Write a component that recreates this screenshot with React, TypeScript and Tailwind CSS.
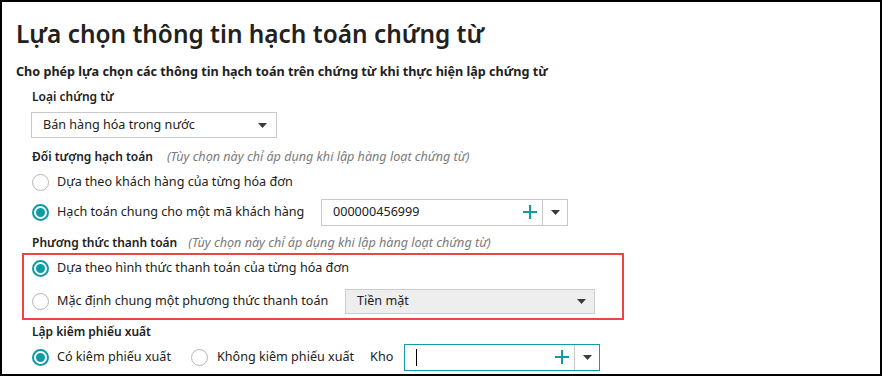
import React from "react";

const Radio = ({ checked }: { checked?: boolean }) =>
  checked ? (
    <span className="flex h-[17px] w-[17px] shrink-0 items-center justify-center rounded-full border-2 border-[#0e9aa7] bg-white">
      <span className="h-[9px] w-[9px] rounded-full bg-[#0e9aa7]" />
    </span>
  ) : (
    <span className="block h-[17px] w-[17px] shrink-0 rounded-full border border-[#b5b5b5] bg-white" />
  );

const Caret = () => (
  <svg width="9" height="5" viewBox="0 0 9 5" className="shrink-0">
    <path d="M0 0 H9 L4.5 5 Z" fill="#3a3a3a" />
  </svg>
);

const Plus = () => (
  <svg width="14" height="14" viewBox="0 0 14 14" className="block shrink-0">
    <path d="M7 0 V14 M0 7 H14" stroke="#0e9aa7" strokeWidth="2" />
  </svg>
);

export default function App() {
  return (
    <div
      className="h-[376px] w-[882px] overflow-hidden border-2 border-black bg-white pl-[14px] pt-[14px] text-[12.6px] text-[#212121]"
      style={{ fontFamily: '"Noto Sans", "Open Sans", sans-serif' }}
    >
      <div className="flex h-[36px] items-center text-[24.4px] font-semibold leading-none">
        Lựa chọn thông tin hạch toán chứng từ
      </div>
      <div className="mt-[10px] flex h-[20px] items-center font-bold">
        Cho phép lựa chọn các thông tin hạch toán trên chứng từ khi thực hiện lập chứng từ
      </div>

      <div className="ml-[16px]">
        <div className="mt-[5px] flex h-[20px] items-center text-[12px] font-semibold">Loại chứng từ</div>
        <div className="-ml-px mt-[5px] flex h-[26px] w-[246px] items-center justify-between border border-[#c9c9c9] pl-[11px] pr-[9px]">
          <span>Bán hàng hóa trong nước</span>
          <Caret />
        </div>

        <div className="mt-[9px] flex h-[20px] items-center">
          <span className="text-[12px] font-semibold">Đối tượng hạch toán</span>
          <span className="ml-[14px] italic text-[#7a7a7a]">(Tùy chọn này chỉ áp dụng khi lập hàng loạt chứng từ)</span>
        </div>
        <div className="mt-[2px] flex h-[26px] items-center gap-[8px]">
          <Radio />
          <span>Dựa theo khách hàng của từng hóa đơn</span>
        </div>
        <div className="mt-[4px] flex h-[26px] items-center">
          <Radio checked />
          <span className="ml-[8px]">Hạch toán chung cho một mã khách hàng</span>
          <div className="ml-auto mr-[312px] flex h-[27px] w-[247px] items-center border border-[#c9c9c9]">
            <span className="flex-1 pl-[11px]">000000456999</span>
            <span className="mr-[5px]">
              <Plus />
            </span>
            <span className="flex h-full w-[25px] items-center justify-center border-l border-[#c9c9c9]">
              <Caret />
            </span>
          </div>
        </div>

        <div className="mt-[8px] flex h-[20px] items-center">
          <span className="text-[12px] font-semibold">Phương thức thanh toán</span>
          <span className="ml-[11px] italic text-[#7a7a7a]">(Tùy chọn này chỉ áp dụng khi lập hàng loạt chứng từ)</span>
        </div>
        <div className="-ml-[10px] w-[602px] border-2 border-[#ee4444] pb-[4px] pl-[8px]">
          <div className="flex h-[26px] items-center gap-[8px]">
            <Radio checked />
            <span>Dựa theo hình thức thanh toán của từng hóa đơn</span>
          </div>
          <div className="mt-[7px] flex h-[26px] items-center">
            <Radio />
            <span className="ml-[8px]">Mặc định chung một phương thức thanh toán</span>
            <div className="ml-auto mr-[27px] flex h-[25px] w-[250px] items-center justify-between border border-[#cccccc] bg-[#eeeeee] pl-[11px] pr-[8px]">
              <span>Tiền mặt</span>
              <Caret />
            </div>
          </div>
        </div>

        <div className="mt-[2px] flex h-[20px] items-center text-[12px] font-semibold">Lập kiêm phiếu xuất</div>
        <div className="mt-[2px] flex h-[26px] items-center">
          <Radio checked />
          <span className="ml-[8px]">Có kiêm phiếu xuất</span>
          <span className="ml-[20px] flex">
            <Radio />
          </span>
          <span className="ml-[9px]">Không kiêm phiếu xuất</span>
          <span className="ml-[16px]">Kho</span>
          <div className="ml-[11px] flex h-[27px] w-[196px] items-center border border-[#1599a6]">
            <span className="ml-[11px] h-[17px] w-px bg-black" />
            <span className="flex-1" />
            <span className="mr-[5px]">
              <Plus />
            </span>
            <span className="flex h-full w-[25px] items-center justify-center border-l border-[#c9c9c9]">
              <Caret />
            </span>
          </div>
        </div>
      </div>
    </div>
  );
}
